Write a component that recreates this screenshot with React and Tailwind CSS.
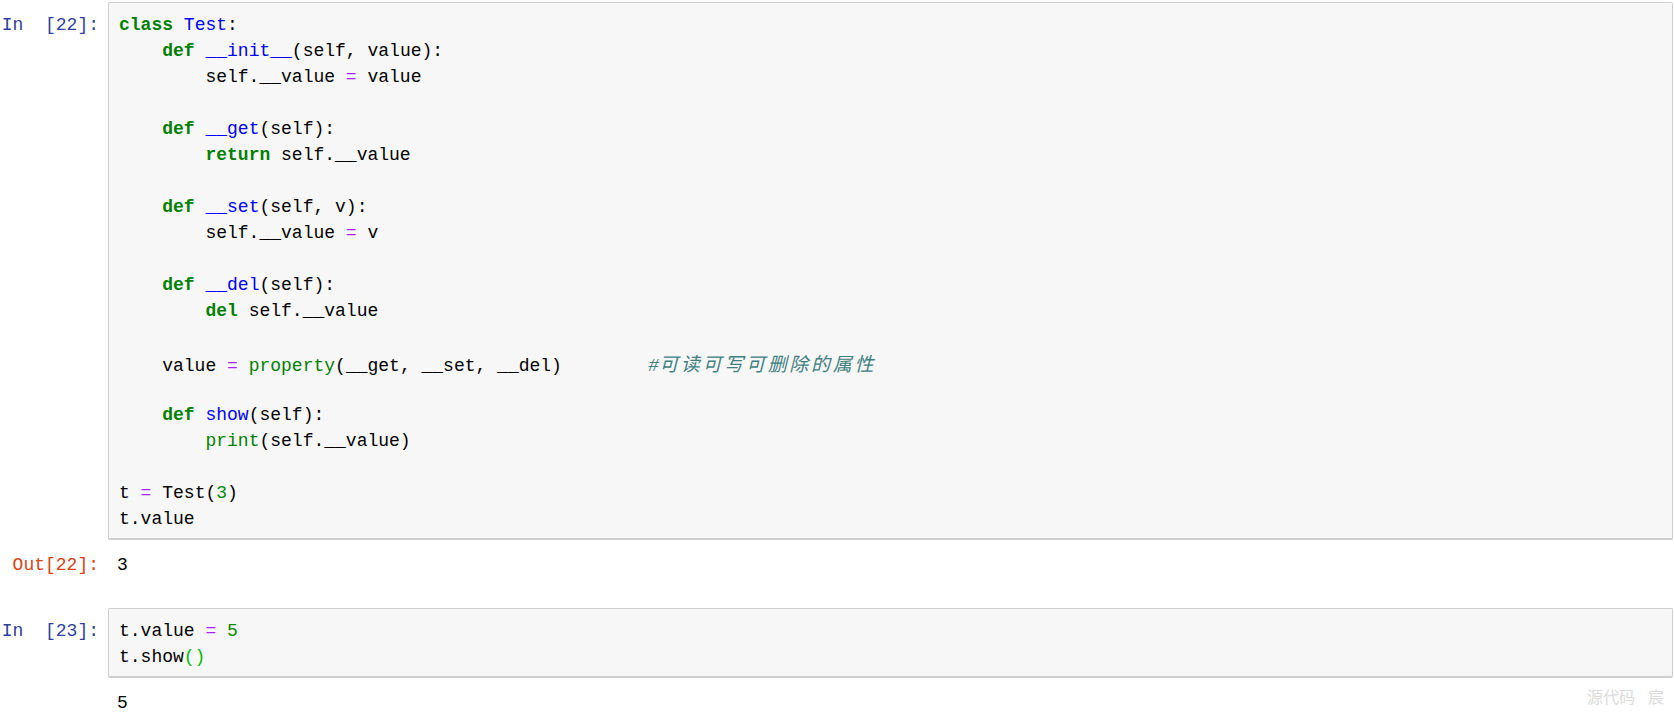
import React from "react";

const KW = "text-[#008000] font-bold";
const DEF = "text-[#0000ff]";
const OP = "text-[#aa22ff]";
const BI = "text-[#008000]";
const NUM = "text-[#008800]";
const CM = "text-[#408080] italic";
const BR = "text-[#00bb00]";

const cell1 = [
  [[KW, "class"], " ", [DEF, "Test"], ":"],
  ["    ", [KW, "def"], " ", [DEF, "__init__"], "(self, value):"],
  ["        self.__value ", [OP, "="], " value"],
  [],
  ["    ", [KW, "def"], " ", [DEF, "__get"], "(self):"],
  ["        ", [KW, "return"], " self.__value"],
  [],
  ["    ", [KW, "def"], " ", [DEF, "__set"], "(self, v):"],
  ["        self.__value ", [OP, "="], " v"],
  [],
  ["    ", [KW, "def"], " ", [DEF, "__del"], "(self):"],
  ["        ", [KW, "del"], " self.__value"],
  [],
  [
    "    value ",
    [OP, "="],
    " ",
    [BI, "property"],
    "(__get, __set, __del)        ",
    [CM, "#"],
    ["cjk", "可读可写可删除的属性"],
  ],
  [],
  ["    ", [KW, "def"], " ", [DEF, "show"], "(self):"],
  ["        ", [BI, "print"], "(self.__value)"],
  [],
  ["t ", [OP, "="], " Test(", [NUM, "3"], ")"],
  ["t.value"],
];

const cell2 = [
  ["t.value ", [OP, "="], " ", [NUM, "5"]],
  ["t.show", [BR, "()"]],
];

const CodeLine = ({ tokens }) => (
  <div className="h-[26px] whitespace-pre">
    {tokens.map((t, i) => {
      if (typeof t === "string") return <span key={i}>{t}</span>;
      if (t[0] === "cjk")
        return (
          <span
            key={i}
            className="text-[#408080] italic text-[19px] tracking-[2.7px] font-['Noto_Sans_CJK_SC',sans-serif]"
          >
            {t[1]}
          </span>
        );
      return (
        <span key={i} className={t[0]}>
          {t[1]}
        </span>
      );
    })}
  </div>
);

const Prompt = ({ children, out }) => (
  <div
    className={`w-[108px] shrink-0 pr-[9px] text-right whitespace-pre ${
      out ? "text-[#d84315]" : "text-[#303f9f]"
    }`}
  >
    {children}
  </div>
);

const InputCell = ({ n, lines }) => (
  <div className="flex">
    <Prompt>
      <div className="pt-[10px]">{`In  [${n}]:`}</div>
    </Prompt>
    <div className="flex-1 border border-[#cfcfcf] border-b-2 rounded-[2px] bg-[#f7f7f7] pt-[9px] pb-[6px] pl-[10px]">
      {lines.map((l, i) => (
        <CodeLine key={i} tokens={l} />
      ))}
    </div>
  </div>
);

const App = () => {
  return (
    <div className="relative w-[1674px] h-[712px] overflow-hidden bg-white pt-[2px] pr-[1px] text-[18px] leading-[26px] text-black font-['Liberation_Mono','Noto_Sans_CJK_SC',monospace]">
      <InputCell n={22} lines={cell1} />

      <div className="flex mt-[12px]">
        <Prompt out>Out[22]:</Prompt>
        <div className="pl-[9px]">3</div>
      </div>

      <div className="mt-[30px]">
        <InputCell n={23} lines={cell2} />
      </div>

      <div className="flex mt-[12px]">
        <Prompt> </Prompt>
        <div className="pl-[9px]">5</div>
      </div>

      {/* watermark */}
      <div className="absolute left-[1587px] top-[683px] flex text-[16px] text-[#dcdcdc] font-['Noto_Sans_CJK_SC',sans-serif]">
        <span>源代码</span>
        <span className="ml-[13px]">宸</span>
      </div>
    </div>
  );
};

export default App;
